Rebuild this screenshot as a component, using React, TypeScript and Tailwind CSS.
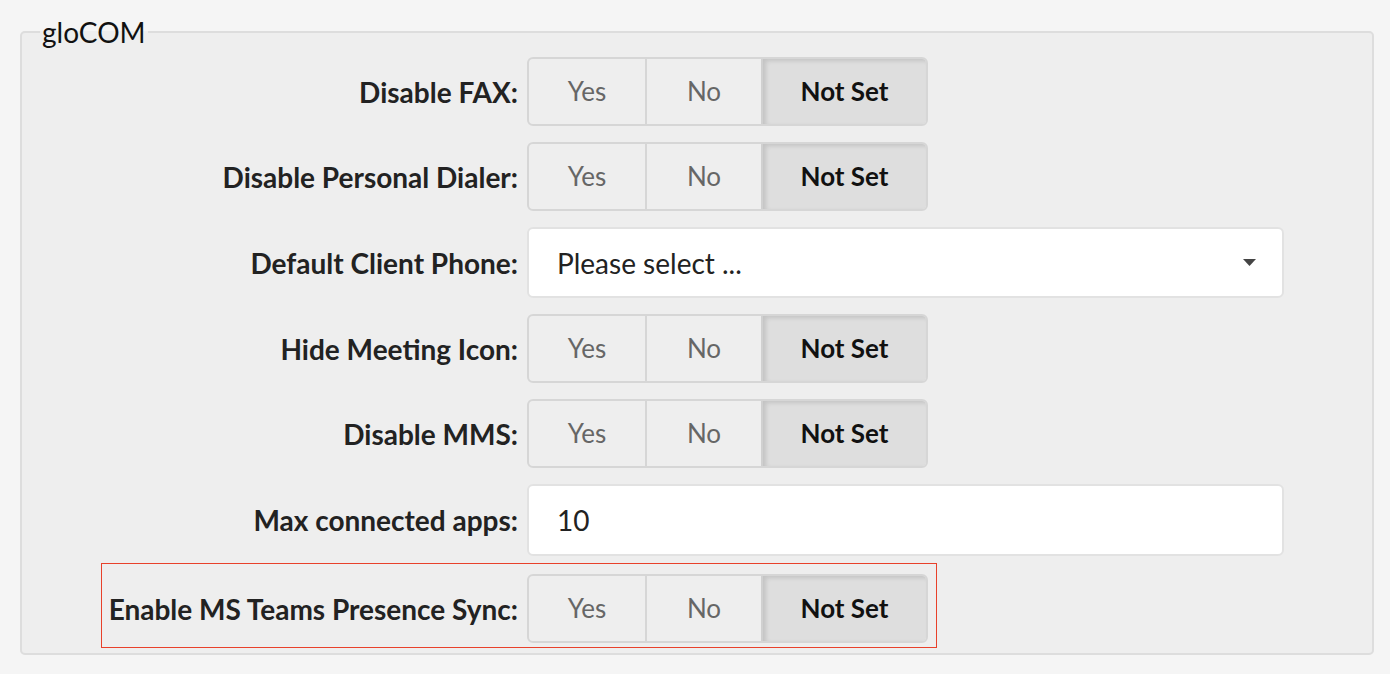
import React from "react"

const font = { fontFamily: "Lato, 'Noto Sans', sans-serif" }

function Toggle() {
  return (
    <div className="flex h-[69px] rounded-[6px] border-2 border-[#d6d6d6] bg-[#eeeeee] overflow-hidden text-[26px]">
      <div className="w-[116px] flex items-center justify-center text-[#666666]">Yes</div>
      <div className="w-[2px] bg-[#d6d6d6]" />
      <div className="w-[114px] flex items-center justify-center text-[#666666]">No</div>
      <div className="w-[2px] bg-[#d0d0d0]" />
      <div className="w-[163px] flex items-center justify-center font-bold text-[#111111] bg-[#dedede] shadow-[inset_3px_2px_4px_rgba(0,0,0,0.12)]">
        Not Set
      </div>
    </div>
  )
}

function Row({ label, children }: { label: string; children: React.ReactNode }) {
  return (
    <div className="flex items-center">
      <div className="w-[496px] text-right font-bold text-[28px] text-[#222222] whitespace-nowrap">{label}</div>
      <div className="ml-[9px]">{children}</div>
    </div>
  )
}

export default function App() {
  return (
    <div className="min-h-screen bg-[#f5f5f5] pt-[15px] pl-[20px] pr-[16px]" style={font}>
      <fieldset className="border-2 border-[#dddddd] rounded-[5px] bg-[#eeeeee] px-0 pb-[5px] m-0">
        <legend className="ml-[18px] px-[2px] text-[28px] leading-[34px] text-[#111111]">gloCOM</legend>
        <div className="flex flex-col gap-[16px] mt-[8px]">
          <Row label="Disable FAX:">
            <Toggle />
          </Row>
          <Row label="Disable Personal Dialer:">
            <Toggle />
          </Row>
          <Row label="Default Client Phone:">
            <div className="w-[757px] h-[71px] bg-white border-2 border-[#e2e2e2] rounded-[6px] flex items-center pl-[28px] pr-[26px] text-[28px] text-[#222222]">
              <span className="flex-1">Please select ...</span>
              <svg width="13" height="8" viewBox="0 0 13 8">
                <polygon points="0,0 13,0 6.5,7" fill="#444444" />
              </svg>
            </div>
          </Row>
          <Row label="Hide Meeting Icon:">
            <Toggle />
          </Row>
          <Row label="Disable MMS:">
            <Toggle />
          </Row>
          <Row label="Max connected apps:">
            <div className="w-[757px] h-[72px] bg-white border-2 border-[#e2e2e2] rounded-[6px] flex items-center pl-[28px] text-[28px] text-[#222222]">
              10
            </div>
          </Row>
        </div>
        <div className="mt-[7px] ml-[79px] w-[836px] border border-[#e8412b] pt-[10px] pb-[4px] flex items-center">
          <div className="w-[416px] text-right font-bold text-[28px] text-[#222222] whitespace-nowrap">Enable MS Teams Presence Sync:</div>
          <div className="ml-[9px]">
            <Toggle />
          </div>
        </div>
      </fieldset>
    </div>
  )
}
